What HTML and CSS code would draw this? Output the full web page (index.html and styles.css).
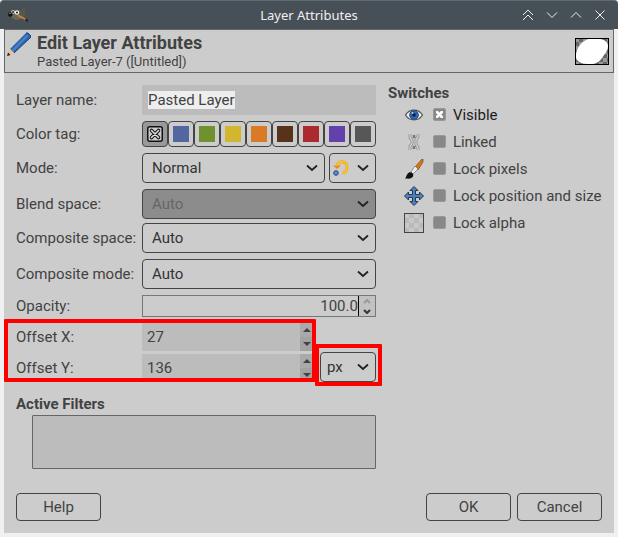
FILE: index.html
```html
<!DOCTYPE html>
<html lang="en">
<head>
    <meta charset="UTF-8">
    <meta name="viewport" content="width=device-width, initial-scale=1.0">
    <title>Layer Attributes</title>
    <link rel="stylesheet" href="styles.css">
</head>
<body>

    <!-- Shared arrow shapes -->
    <svg class="defs" aria-hidden="true">
        <symbol id="chevron" viewBox="0 0 12 8"><path d="M1 1.500l5 4.500 5-4.500" fill="none" stroke="currentColor" stroke-width="1.800"/></symbol>
        <symbol id="up" viewBox="0 0 8 4"><path d="M0 4l4-4 4 4z" fill="currentColor"/></symbol>
        <symbol id="down" viewBox="0 0 8 4"><path d="M0 0l4 4 4-4z" fill="currentColor"/></symbol>
    </svg>

    <!-- Title bar -->
    <div class="titlebar">
        <svg class="app-icon" viewBox="0 0 20 16">
            <path d="M3 4l3-1 4 1 4-1 3-3 0 5-1 4-3 3-5 1-4-2-2-3z" fill="#6b665a"/>
            <path d="M11 5l6-5v5l-1 4-3 1z" fill="#5a5548"/>
            <circle cx="5" cy="5" r="1.800" fill="#e8e8e8"/><circle cx="9" cy="5.500" r="2.200" fill="#f4f4f4"/>
            <circle cx="5" cy="5" r="0.900" fill="#111"/><circle cx="9" cy="5.500" r="1" fill="#111"/>
            <circle cx="2.300" cy="7.500" r="2.300" fill="#151515"/><circle cx="2" cy="6.500" r="0.600" fill="#ddd"/>
            <path d="M10 8.500l8 4" stroke="#d98324" stroke-width="1.500"/><path d="M17 11.500l3 1-1 3z" fill="#171717"/>
        </svg>
        <span class="titlebar-text">Layer Attributes</span>
        <div class="window-buttons">
            <button aria-label="Keep above"><svg viewBox="0 0 12 12"><path d="M1 6l5-5 5 5M1 11l5-5 5 5"/></svg></button>
            <button aria-label="Minimize"><svg viewBox="0 0 12 12"><path d="M1 3.500l5 5 5-5"/></svg></button>
            <button aria-label="Maximize"><svg viewBox="0 0 12 12"><path d="M1 8.500l5-5 5 5"/></svg></button>
            <button aria-label="Close"><svg viewBox="0 0 12 12"><path d="M1.500 1.500l9 9M10.500 1.500l-9 9"/></svg></button>
        </div>
    </div>

    <form class="dialog">
        <!-- Header -->
        <header class="header">
            <svg class="pencil" viewBox="0 0 24 24">
                <path d="M3 17L19 1l2 0 3 3 0 1L7 21z" fill="#2b65b0"/>
                <path d="M4.500 18L20 2.500l1.500 1.500L6 20z" fill="#4a80c6"/>
                <path d="M19 1h2l3 3v1L7 21" fill="none" stroke="#1d3f70"/>
                <path d="M3 17l4 4-6 3-1-1z" fill="#efc391"/><path d="M1 20.500L0 24l3.500-1z" fill="#222"/>
            </svg>
            <div class="header-text">
                <h1>Edit Layer Attributes</h1>
                <p>Pasted Layer-7 ([Untitled])</p>
            </div>
            <svg class="thumbnail" viewBox="0 0 34 27">
                <defs>
                    <pattern id="dark-checks" width="8" height="8" patternUnits="userSpaceOnUse">
                        <rect width="8" height="8" fill="#666"/><path d="M0 0h4v4H0zM4 4h4v4H4z" fill="#999"/>
                    </pattern>
                </defs>
                <rect width="34" height="27" fill="url(#dark-checks)"/>
                <path d="M13 1h12c5 1 8 3 8 7 0 4-4 9-6 12-3 4-6 6-12 6-7 0-12-1-14-6-1-7 4-16 12-19z" fill="#fff"/>
                <rect x="0.500" y="0.500" width="33" height="26" fill="none" stroke="#000"/>
            </svg>
        </header>

        <div class="columns">
            <!-- Layer fields -->
            <div class="fields">
                <div class="group">
                    <div class="row">
                        <label for="layer-name">Layer name:</label>
                        <div class="name-box"><input type="text" id="layer-name" value="Pasted Layer"></div>
                    </div>
                    <div class="row">
                        <span>Color tag:</span>
                        <div class="tags" role="radiogroup" aria-label="Color tag">
                            <label class="tag-none">
                                <input type="radio" name="tag" class="tag" aria-label="None" checked>
                                <svg viewBox="0 0 16 16">
                                    <rect x="0.750" y="0.750" width="14.500" height="14.500" rx="2" fill="#ccc" stroke="#111" stroke-width="1.500"/>
                                    <path d="M4.500 4.500l7 7M11.500 4.500l-7 7" stroke="#111" stroke-width="3.600" stroke-linecap="round"/>
                                    <path d="M4.500 4.500l7 7M11.500 4.500l-7 7" stroke="#ddd" stroke-width="1.600" stroke-linecap="round"/>
                                </svg>
                            </label>
                            <input type="radio" name="tag" class="tag blue" aria-label="Blue">
                            <input type="radio" name="tag" class="tag green" aria-label="Green">
                            <input type="radio" name="tag" class="tag yellow" aria-label="Yellow">
                            <input type="radio" name="tag" class="tag orange" aria-label="Orange">
                            <input type="radio" name="tag" class="tag brown" aria-label="Brown">
                            <input type="radio" name="tag" class="tag red" aria-label="Red">
                            <input type="radio" name="tag" class="tag violet" aria-label="Violet">
                            <input type="radio" name="tag" class="tag gray" aria-label="Gray">
                        </div>
                    </div>
                    <div class="row">
                        <label for="mode">Mode:</label>
                        <div class="mode">
                            <div class="select">
                                <select id="mode"><option>Normal</option></select>
                                <svg class="chevron"><use href="#chevron"/></svg>
                            </div>
                            <button type="button" class="mode-switch" aria-label="Switch mode group">
                                <svg class="reset-icon" viewBox="0 0 16 16">
                                    <path d="M4 5c2-4.500 10-4.500 10 2 0 4-2 6-5 6" fill="none" stroke="#f0960f" stroke-width="2.600"/>
                                    <path d="M0 5.500h8L4 9z" fill="#ee8a10"/>
                                    <path d="M4 5c2-4.500 10-4.500 10 2 0 4-2 6-5 6" fill="none" stroke="#fcd514" stroke-width="1.400"/>
                                    <circle cx="3" cy="13" r="2.300" fill="#5a8cc8" stroke="#204a87"/>
                                </svg>
                                <svg class="chevron"><use href="#chevron"/></svg>
                            </button>
                        </div>
                    </div>
                    <div class="row">
                        <label for="blend">Blend space:</label>
                        <div class="select">
                            <select id="blend" disabled><option>Auto</option></select>
                            <svg class="chevron"><use href="#chevron"/></svg>
                        </div>
                    </div>
                </div>

                <div class="group">
                    <div class="row">
                        <label for="composite-space">Composite space:</label>
                        <div class="select">
                            <select id="composite-space"><option>Auto</option></select>
                            <svg class="chevron"><use href="#chevron"/></svg>
                        </div>
                    </div>
                    <div class="row">
                        <label for="composite-mode">Composite mode:</label>
                        <div class="select">
                            <select id="composite-mode"><option>Auto</option></select>
                            <svg class="chevron"><use href="#chevron"/></svg>
                        </div>
                    </div>
                    <div class="row">
                        <label for="opacity">Opacity:</label>
                        <div class="opacity">
                            <input type="text" id="opacity" value="100.0">
                            <div class="steps">
                                <button type="button" aria-label="More opacity" disabled><svg viewBox="0 0 8 5"><path d="M1 4l3-3 3 3"/></svg></button>
                                <button type="button" aria-label="Less opacity"><svg viewBox="0 0 8 5"><path d="M1 1l3 3 3-3"/></svg></button>
                            </div>
                        </div>
                    </div>

                    <!-- Offsets -->
                    <div class="offsets">
                        <div class="offset-rows">
                            <div class="row">
                                <label for="offset-x">Offset X:</label>
                                <div class="spin">
                                    <input type="text" id="offset-x" value="27">
                                    <div class="spin-buttons">
                                        <button type="button" aria-label="Increase X"><svg><use href="#up"/></svg></button>
                                        <button type="button" aria-label="Decrease X"><svg><use href="#down"/></svg></button>
                                    </div>
                                </div>
                            </div>
                            <div class="row">
                                <label for="offset-y">Offset Y:</label>
                                <div class="spin">
                                    <input type="text" id="offset-y" value="136">
                                    <div class="spin-buttons">
                                        <button type="button" aria-label="Increase Y"><svg><use href="#up"/></svg></button>
                                        <button type="button" aria-label="Decrease Y"><svg><use href="#down"/></svg></button>
                                    </div>
                                </div>
                            </div>
                            <div class="marker marker-offsets"></div>
                        </div>
                        <div class="select unit">
                            <select id="unit" aria-label="Unit"><option>px</option></select>
                            <svg class="chevron"><use href="#chevron"/></svg>
                            <div class="marker marker-unit"></div>
                        </div>
                    </div>
                </div>

                <h2 class="filters-title">Active Filters</h2>
                <div class="filters"></div>
            </div>

            <!-- Switches -->
            <div class="switches">
                <h2>Switches</h2>
                <div class="switch">
                    <svg viewBox="0 0 20 20">
                        <path d="M1.500 10c4-6.500 13-6.500 17 0-4 6.500-13 6.500-17 0z" fill="#eee" stroke="#555" stroke-width="1.300"/>
                        <circle cx="10" cy="10" r="4.300" fill="#2f6bb3" stroke="#1c4680"/><circle cx="10" cy="10" r="1.800" fill="#0c1c38"/>
                        <circle cx="8.500" cy="8" r="1" fill="#a8c8ec"/>
                    </svg>
                    <input type="checkbox" id="visible" checked>
                    <label for="visible">Visible</label>
                </div>
                <div class="switch">
                    <svg viewBox="0 0 20 20" fill="none">
                        <path d="M6 2v4l2 2v4l-2 2v4M14 2v3l-2 2v6l2 2v3M10 3v3M10 14v3" stroke="#777" stroke-width="2.600"/>
                        <path d="M6 2v4l2 2v4l-2 2v4M14 2v3l-2 2v6l2 2v3" stroke="#e4e4e4" stroke-width="1.200"/>
                    </svg>
                    <input type="checkbox" id="linked">
                    <label for="linked">Linked</label>
                </div>
                <div class="switch">
                    <svg viewBox="0 0 20 20">
                        <path d="M11 8l7-8h1v3l-5 8z" fill="#cf7717" stroke="#87480c" stroke-width="0.700"/>
                        <path d="M7 13l4-6 3 3-5 5z" fill="#eee" stroke="#777" stroke-width="0.800"/>
                        <path d="M1 19.500c2-2 1-4 4-6 3-1 5 2 4 4-2 3-5 2-8 2z" fill="#111"/>
                    </svg>
                    <input type="checkbox" id="lock-pixels">
                    <label for="lock-pixels">Lock pixels</label>
                </div>
                <div class="switch">
                    <svg viewBox="0 0 20 20">
                        <path d="M10 .5l4 4h-2.500v4h4V6l4 4-4 4v-2.500h-4v4H14l-4 4-4-4h2.500v-4h-4V14l-4-4 4-4v2.500h4v-4H6z" fill="#4a7fc0" stroke="#25364d"/>
                    </svg>
                    <input type="checkbox" id="lock-position">
                    <label for="lock-position">Lock position and size</label>
                </div>
                <div class="switch">
                    <svg viewBox="0 0 20 20">
                        <rect x="0.500" y="0.500" width="19" height="19" fill="#c8c8c8" stroke="#444"/>
                        <path d="M5 1h5v4H5zM15 1h4v4h-4zM1 5h4v5H1zM10 5h5v5h-5zM5 10h5v5H5zM15 10h4v5h-4zM1 15h4v4H1zM10 15h5v4h-5z" fill="#bababa"/>
                    </svg>
                    <input type="checkbox" id="lock-alpha">
                    <label for="lock-alpha">Lock alpha</label>
                </div>
            </div>
        </div>

        <!-- Buttons -->
        <footer class="footer">
            <button type="button" class="help">Help</button>
            <button type="button">OK</button>
            <button type="button">Cancel</button>
        </footer>
    </form>

</body>
</html>
```
FILE: styles.css
```css
* {
    box-sizing: border-box;
}

body {
    margin: 0;
    background-color: #eff0f1;
    color: #424242;
    font-family: Roboto, "Noto Sans", sans-serif;
    font-size: 15px;
    line-height: 18px;
}

button,
input,
select {
    margin: 0;
    padding: 0;
    border: none;
    border-radius: 0;
    background: none;
    color: inherit;
    font: inherit;
    appearance: none;
    outline: none;
}

svg {
    display: block;
}

h1,
h2,
p {
    margin: 0;
}

h2 {
    font-size: 15px;
    line-height: 18px;
}

.defs {
    display: none;
}

/* Title bar */
.titlebar {
    display: grid;
    grid-template-columns: 1fr auto 1fr;
    align-items: center;
    height: 29px;
    padding: 0 12px 0 8px;
    border-top: 1px solid #5c6a72;
    border-radius: 4px 4px 0 0;
    background-color: #475057;
    color: #eff0f1;
}

.titlebar-text {
    padding-left: 4px;
    font-family: "Noto Sans", sans-serif;
    font-size: 13px;
}

.app-icon {
    width: 20px;
    height: 16px;
}

.window-buttons {
    display: flex;
    justify-content: flex-end;
    gap: 12px;
}

.window-buttons svg {
    width: 12px;
    height: 12px;
    fill: none;
    stroke: #eff0f1;
}

.dialog {
    margin: 0 4px 4px;
    background-color: #cccccc;
}

/* Header */
.header {
    display: flex;
    align-items: center;
    height: 44px;
    padding: 0 4px 0 2px;
    border: 1px solid #666;
}

.pencil {
    width: 24px;
    height: 24px;
    margin-bottom: 14px;
}

.header-text {
    flex: 1;
    padding-left: 6px;
}

.header h1 {
    font-size: 18px;
    line-height: 22px;
}

.header p {
    font-size: 13px;
    line-height: 16px;
}

.thumbnail {
    width: 34px;
    height: 27px;
}

.columns {
    display: flex;
    gap: 12px;
    padding: 12px 8px 0 12px;
}

/* Layer fields */
.fields {
    flex: 0 0 61%;
    min-width: 0;
}

.group {
    display: flex;
    flex-direction: column;
    gap: 6px;
    margin-bottom: 4px;
}

.row {
    display: grid;
    grid-template-columns: 126px minmax(0, 1fr);
    align-items: center;
}

.name-box {
    height: 30px;
    padding: 6px;
    background-color: #bcbcbc;
}

.name-box input {
    display: block;
    height: 18px;
    max-width: 100%;
    field-sizing: content;
    background-color: #eee;
}

.tags {
    display: grid;
    grid-template-columns: repeat(9, 1fr);
}

.tag {
    display: block;
    width: 100%;
    height: 26px;
    padding: 4px;
    border: 1px solid #444;
    border-radius: 4px;
    background-clip: content-box;
}

.tag:checked {
    background: #999;
}

.tag-none {
    position: relative;
}

.tag-none svg {
    position: absolute;
    top: 5px;
    left: 5px;
    width: 16px;
    height: 16px;
}

.blue { background-color: #5466a0; }
.green { background-color: #6f9130; }
.yellow { background-color: #d2b62d; }
.orange { background-color: #d97a26; }
.brown { background-color: #57331a; }
.red { background-color: #aa2a2f; }
.violet { background-color: #6341ad; }
.gray { background-color: #575757; }

.mode {
    display: grid;
    grid-template-columns: 1fr 47px;
    gap: 4px;
}

.select {
    position: relative;
}

.select select {
    display: block;
    width: 100%;
    height: 30px;
    padding: 0 24px 0 9px;
    border: 1px solid #444;
    border-radius: 4px;
    color: #333;
}

.select select:disabled {
    background-color: #8c8c8c;
    color: #666;
    opacity: 1;
}

.unit select {
    padding-left: 6px;
}

.chevron {
    width: 12px;
    height: 8px;
    color: #222;
}

.select .chevron {
    position: absolute;
    top: 11px;
    right: 7px;
    pointer-events: none;
}

.mode-switch {
    display: flex;
    align-items: center;
    justify-content: space-between;
    height: 30px;
    padding: 0 6px 0 3px;
    border: 1px solid #444;
    border-radius: 4px;
}

.reset-icon {
    width: 16px;
    height: 16px;
}

.opacity {
    display: flex;
    height: 22px;
    border: 1px solid #777;
}

.opacity input {
    flex: 1;
    min-width: 0;
    border-right: 1px solid #000;
    text-align: right;
}

.steps {
    display: flex;
    flex-direction: column;
    width: 16px;
    background-color: #c2c2c2;
}

.steps button {
    display: grid;
    flex: 1;
    place-items: center;
    color: #333;
}

.steps button:disabled {
    color: #999;
}

.steps svg {
    width: 8px;
    height: 5px;
    fill: none;
    stroke: currentColor;
    stroke-width: 2;
}

/* Offsets */
.offsets {
    display: grid;
    grid-template-columns: minmax(0, 1fr) 56px;
    align-items: end;
    gap: 6px;
}

.offset-rows {
    position: relative;
    display: flex;
    flex-direction: column;
    gap: 3px;
}

.spin {
    display: flex;
    height: 28px;
    background-color: #bcbcbc;
}

.spin input {
    flex: 1;
    min-width: 0;
    padding-left: 5px;
}

.spin-buttons {
    display: flex;
    flex-direction: column;
    width: 14px;
    background-color: #aaa;
}

.spin-buttons button {
    display: grid;
    flex: 1;
    place-items: center;
}

.spin-buttons button + button {
    background-color: #a2a2a2;
}

.spin-buttons svg {
    width: 8px;
    height: 4px;
}

.marker {
    position: absolute;
    border: 4px solid #ff0000;
    border-radius: 1px;
    pointer-events: none;
}

.marker-offsets {
    inset: -4px -2px 0 -12px;
}

.marker-unit {
    inset: -8px -6px -4px -5px;
}

.filters-title {
    margin-top: 13px;
}

.filters {
    height: 54px;
    margin: 2px 0 0 16px;
    border: 1px solid #666;
    border-radius: 1px;
    background-color: #bcbcbc;
}

/* Switches */
.switches {
    flex: 1;
    min-width: 0;
}

.switches h2 {
    line-height: 16px;
}

.switch {
    display: flex;
    align-items: center;
    height: 27px;
    padding-left: 16px;
    white-space: nowrap;
}

.switch svg {
    width: 20px;
    height: 20px;
}

.switch input {
    width: 13px;
    height: 13px;
    margin: 0 7px 0 9px;
    border: 1px solid #999;
    border-radius: 2px;
    background-color: #888;
}

.switch input:checked::before {
    content: "";
    display: block;
    width: 7px;
    height: 7px;
    margin: 2px;
    background-color: #fff;
    clip-path: polygon(0 0, 30% 0, 50% 25%, 70% 0, 100% 0, 100% 30%, 75% 50%, 100% 70%, 100% 100%, 70% 100%, 50% 75%, 30% 100%, 0 100%, 0 70%, 25% 50%, 0 30%);
}

.switch input:checked + label {
    color: #1c1c1c;
}

/* Buttons */
.footer {
    display: flex;
    gap: 6px;
    padding: 24px 12px 12px;
}

.footer button {
    width: 85px;
    height: 28px;
    border: 1px solid #444;
    border-radius: 4px;
}

.footer .help {
    margin-right: auto;
}
```
